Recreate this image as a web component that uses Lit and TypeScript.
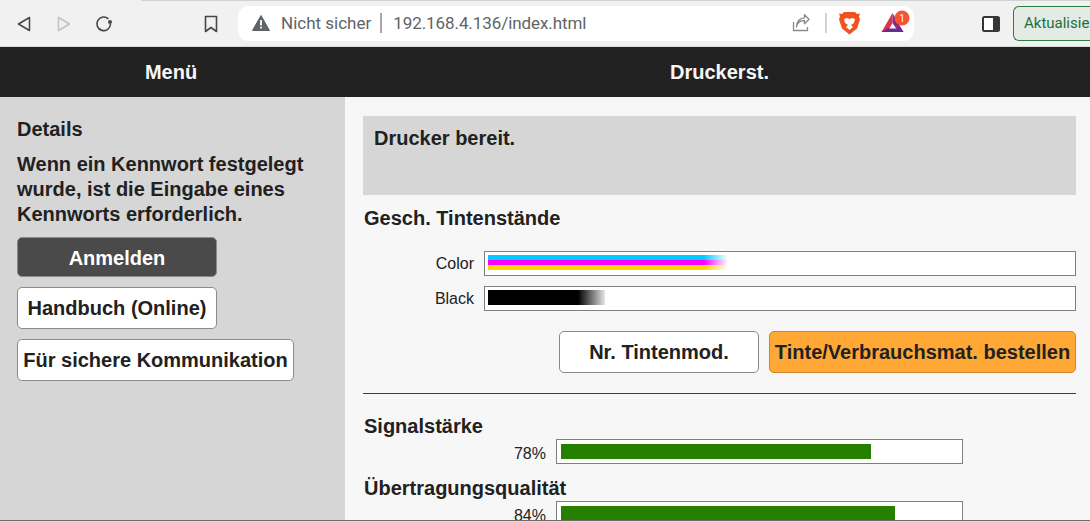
import { LitElement, html, css } from "lit";
import { customElement } from "lit/decorators.js";

@customElement("app-root")
export class AppRoot extends LitElement {
  static styles = css`
    :host { display: block; width: 1090px; height: 522px; overflow: hidden; position: relative; background: #f7f7f7; font-family: "Liberation Sans", Arial, sans-serif; color: #212121; }
    * { box-sizing: border-box; }
    .chrome { height: 47px; background: linear-gradient(90deg, #f1f1f1 141px, #cfd1d5 141px) top / 100% 1px no-repeat, #f1f1f1; padding-top: 1px; border-bottom: 1px solid #dadada; display: flex; align-items: center; position: relative; }
    .chrome svg { display: block; flex: none; }
    .back { margin-left: 16px; }
    .fwd { margin-left: 20px; }
    .reload { margin-left: 23px; }
    .bm { margin-left: 91px; }
    .omni { flex: none; margin-left: 20px; width: 676px; height: 35px; margin-top: -1px; background: #fff; border-radius: 10px; display: flex; align-items: center; color: #5f6368; white-space: nowrap; }
    .omni .warn { margin-left: 14px; }
    .omni .ns { margin-left: 11px; font-family: Roboto, sans-serif; font-size: 17px; }
    .omni .sep { width: 2px; height: 20px; background: #a8a8a8; margin-left: 9px; }
    .omni .url { margin-left: 11px; font-family: Roboto, sans-serif; font-size: 17px; color: #5f6368; letter-spacing: -0.08px; }
    .omni .sp { flex: 1; }
    .omni .sep2 { width: 2px; height: 20px; background: #d4d4d4; margin-left: 15px; }
    .omni .lion { margin-left: 12px; }
    .omni .bat { margin-left: 21px; margin-right: 3px; }
    .panel { margin-left: 68px; }
    .update { flex: none; margin-left: 13px; width: 77px; height: 35px; margin-top: -1px; background: #e3ebe4; border: 1px solid #2e7d47; border-right: 0; border-radius: 6px 0 0 6px; color: #1f6f3a; font-family: Roboto, sans-serif; font-size: 15px; line-height: 32px; padding-left: 10px; white-space: nowrap; overflow: hidden; }

    .hdr { height: 50px; background: #212121; color: #f7f7f7; display: flex; font-weight: 700; font-size: 20px; line-height: 50px; text-align: center; }
    .hdr .l { width: 342px; }
    .hdr .r { flex: 1; padding-left: 7px; }

    .main { display: flex; height: 425px; }
    .side { width: 345px; flex: none; background: #d6d6d6; padding: 20px 17px 0; font-weight: 700; font-size: 20px; }
    .side .t { line-height: 25px; height: 25px; }
    .side p { margin: 10px 0 0; font-size: 20px; line-height: 25px; width: 300px; }
    .btn { display: flex; align-items: center; justify-content: center; height: 42px; border: 1px solid #8a8a8a; border-radius: 5px; background: #fff; color: #212121; font-weight: 700; font-size: 20px; white-space: nowrap; }
    .side .btn { width: 200px; margin-top: 10px; }
    .side .login { height: 40px; padding-top: 2px; background: #4a4a4a; color: #fff; }
    .side .wide { width: 277px; }

    .content { flex: 1; padding: 19px 14px 0 18px; min-width: 0; }
    .status { height: 79px; background: #d6d6d6; padding: 9px 11px; font-weight: 700; font-size: 20px; line-height: 26px; }
    h2 { margin: 0; font-weight: 700; font-size: 20px; line-height: 24px; padding-left: 1px; }
    .ink { margin-top: 11px; }
    .inks { margin-top: 21px; display: grid; grid-template-columns: 111px 1fr; column-gap: 10px; row-gap: 10px; align-items: center; }
    .lab { text-align: right; font-size: 16px; height: 25px; line-height: 25px; }
    .bar { height: 25px; border: 1px solid #808080; background: #fff; padding: 3px; }
    .cmy { width: 240px; height: 15px; background: linear-gradient(#00ccff 0 33.3%, #ff00ff 33.3% 66.6%, #ffd700 66.6%);
      -webkit-mask-image: linear-gradient(90deg, #000 90%, transparent 100%); mask-image: linear-gradient(90deg, #000 90%, transparent 100%); }
    .blk { width: 117px; height: 15px; background: linear-gradient(90deg, #000 77%, rgba(0,0,0,0.1) 100%); }
    .acts { display: flex; justify-content: flex-end; gap: 10px; margin-top: 20px; }
    .acts .nr { width: 200px; }
    .acts .order { width: 307px; background: #ffa836; border-color: #cf8429; }
    hr { border: 0; border-top: 1px solid #3c3c3c; margin: 20px 0 0; }
    .sig { margin-top: 20px; }
    .meter { display: flex; align-items: center; height: 25px; margin-top: 1px; }
    .meter .pc { width: 183px; text-align: right; font-size: 16px; line-height: 25px; padding-top: 4px; }
    .meter .track { margin-left: 10px; width: 407px; height: 25px; border: 1px solid #808080; background: #fff; padding: 4px; flex: none; }
    .meter .fill { height: 15px; background: #258000; }
    .q { margin-top: 12px; }
    .baseline { position: absolute; left: 0; right: 0; bottom: 0; height: 2px; border-top: 1px solid #6e6e6e; background: #dcdcdc; }
  `;

  render() {
    return html`
      <div class="chrome">
        <svg class="back" width="18" height="18" viewBox="0 0 18 18"><path d="M13.5 2.5v13L2.5 9z" fill="none" stroke="#45474a" stroke-width="1.6" stroke-linejoin="round"/></svg>
        <svg class="fwd" width="18" height="18" viewBox="0 0 18 18"><path d="M4.5 2.5v13l11-6.5z" fill="none" stroke="#c2c2c2" stroke-width="1.6" stroke-linejoin="round"/></svg>
        <svg class="reload" width="18" height="18" viewBox="0 0 18 18"><path d="M15.5 9a6.800 6.800 0 1 1-2-5" fill="none" stroke="#45474a" stroke-width="1.6"/><circle cx="15" cy="7" r="2" fill="#45474a"/></svg>
        <svg class="bm" width="14" height="18" viewBox="0 0 14 18"><path d="M1.5 1.5h11v15L7 12.500l-5.500 4z" fill="none" stroke="#45474a" stroke-width="1.6" stroke-linejoin="round"/></svg>
        <div class="omni">
          <svg class="warn" width="18" height="16" viewBox="0 0 18 16"><path d="M9 .5 17.500 15.500H.5z" fill="#5f6368" stroke="#5f6368" stroke-linejoin="round"/><path d="M8.100 5h1.800v5.500H8.100zM8.100 11.800h1.800v1.800H8.100z" fill="#fff"/></svg>
          <span class="ns">Nicht sicher</span><span class="sep"></span>
          <span class="url">192.168.4.136/index.html</span>
          <span class="sp"></span>
          <svg width="18" height="18" viewBox="0 0 18 18"><path d="M1.500 8v8.500h14V13" fill="none" stroke="#8a8a8a" stroke-width="1.300"/><path d="M4.500 13c.5-4 3.500-6.500 8-6.500V9.800L17 5.200 12.500.8v3C7.500 3.800 4.500 8 4.500 13z" fill="none" stroke="#8a8a8a" stroke-width="1.300" stroke-linejoin="round"/></svg>
          <span class="sep2"></span>
          <svg class="lion" width="21" height="24" viewBox="0 0 21 24"><path d="M5 1h11l2 2 3-.5-1 3 1 3-3 9-7.500 6-7.500-6-3-9 1-3-1-3 3 .5z" fill="#f1521d"/><path d="M5 8l3-1 2.500 1 2.500-1 3 1-1 4-3 2 2 2-3.500 3-3.500-3 2-2-3-2z" fill="#fff"/></svg>
          <svg class="bat" width="30" height="26" viewBox="0 0 30 26"><path d="M11.500 3 .5 22h6l5-9z" fill="#e0314f"/><path d="M11.500 3 22.500 22h-5l-6-9z" fill="#8c2a85"/><path d="M.5 22h22l-3-3.500H6z" fill="#6a2a8f"/><circle cx="21" cy="8" r="7.500" fill="#fa5230"/><text x="21" y="11.500" text-anchor="middle" font-size="10" font-family="Roboto, sans-serif" fill="#fff">1</text></svg>
        </div>
        <svg class="panel" width="18" height="16" viewBox="0 0 18 16"><rect x="1" y="1" width="16" height="14" rx="1.500" fill="#fff" stroke="#35363a" stroke-width="2"/><rect x="11" y="1" width="6" height="14" fill="#35363a"/></svg>
        <div class="update">Aktualisieren</div>
      </div>
      <div class="hdr"><div class="l">Menü</div><div class="r">Druckerst.</div></div>
      <div class="main">
        <div class="side">
          <div class="t">Details</div>
          <p>Wenn ein Kennwort festgelegt wurde, ist die Eingabe eines Kennworts erforderlich.</p>
          <div class="btn login">Anmelden</div>
          <div class="btn">Handbuch (Online)</div>
          <div class="btn wide">Für sichere Kommunikation</div>
        </div>
        <div class="content">
          <div class="status">Drucker bereit.</div>
          <h2 class="ink">Gesch. Tintenstände</h2>
          <div class="inks">
            <div class="lab">Color</div><div class="bar"><div class="cmy"></div></div>
            <div class="lab">Black</div><div class="bar"><div class="blk"></div></div>
          </div>
          <div class="acts"><div class="btn nr">Nr. Tintenmod.</div><div class="btn order">Tinte/Verbrauchsmat. bestellen</div></div>
          <hr />
          <h2 class="sig">Signalstärke</h2>
          <div class="meter"><div class="pc">78%</div><div class="track"><div class="fill" style="width:78%"></div></div></div>
          <h2 class="q">Übertragungsqualität</h2>
          <div class="meter"><div class="pc">84%</div><div class="track"><div class="fill" style="width:84.1%"></div></div></div>
        </div>
      </div>
      <div class="baseline"></div>
    `;
  }
}
